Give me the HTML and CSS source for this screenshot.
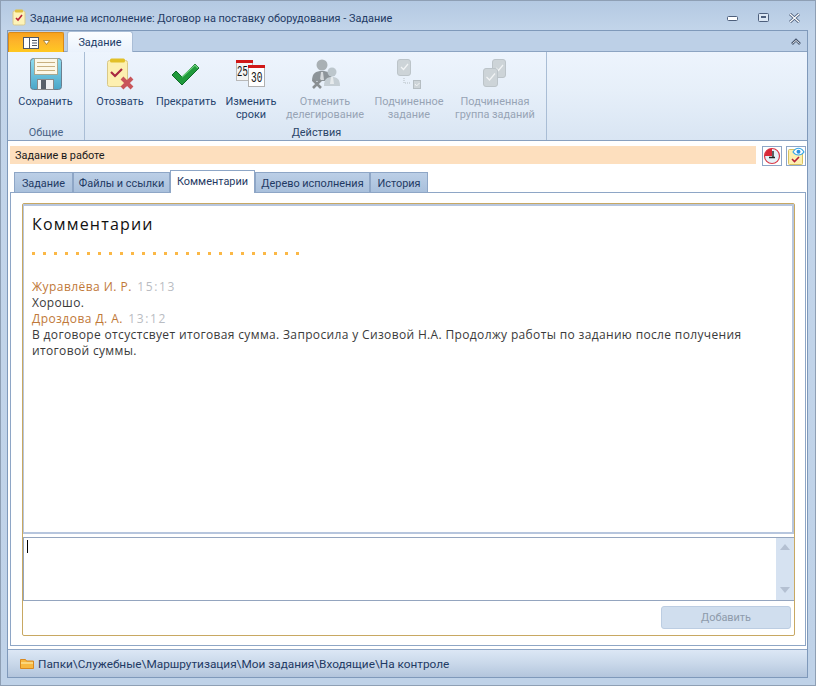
FILE: index.html
```html
<!DOCTYPE html>
<html lang="ru">
<head>
<meta charset="utf-8">
<title>Задание на исполнение</title>
<link rel="stylesheet" href="styles.css">
</head>
<body>
<div class="window">
  <div class="titlebar">
    <svg class="title-icon" width="14" height="17" viewBox="0 0 14 17">
      <rect x="1" y="2" width="12" height="14" rx="1.5" fill="#fdf3b8" stroke="#d9c98e"/>
      <rect x="3" y="0.5" width="8" height="3" rx="1" fill="#e0c040"/>
      <path d="M4 9l2 2 4-5" fill="none" stroke="#b8203a" stroke-width="1.6"/>
    </svg>
    <span class="title-text">Задание на исполнение: Договор на поставку оборудования - Задание</span>
    <div class="winbtns">
      <svg width="13" height="8" viewBox="0 0 13 8"><rect x="1.5" y="2.5" width="10" height="4" rx="1" fill="#fff" stroke="#4d5f7c"/></svg>
      <svg width="13" height="10" viewBox="0 0 13 10"><rect x="1.5" y="0.5" width="10" height="8" rx="1" fill="#dce7f4" stroke="#4d5f7c"/><rect x="4" y="3" width="5" height="2" fill="#4d5f7c"/></svg>
      <svg width="13" height="10" viewBox="0 0 13 10"><path d="M2 1l9 8M11 1l-9 8" stroke="#4d5f7c" stroke-width="3"/><path d="M2 1l9 8M11 1l-9 8" stroke="#fff" stroke-width="1.2"/></svg>
    </div>
  </div>

  <div class="frame">
    <div class="ribbon-tabs">
      <div class="appmenu">
        <svg width="17" height="12" viewBox="0 0 17 12"><rect x="0.5" y="0.5" width="15" height="11" fill="#fff" stroke="#4d5668"/><path d="M6.5 1v10M9 3.500h5M9 6h5M9 8.500h5" stroke="#4d5668"/></svg>
        <svg width="7" height="5" viewBox="0 0 7 5"><path d="M0.500 0.500h6l-3 4z" fill="#fff" stroke="#8a6a20" stroke-width="0.700"/></svg>
      </div>
      <div class="ribbon-tab">Задание</div>
      <svg class="collapse" width="10" height="8" viewBox="0 0 10 8"><path d="M1 6l4-4 4 4" fill="none" stroke="#46556e" stroke-width="2.600"/><path d="M1.500 5.500l3.500-3 3.500 3" fill="none" stroke="#fff" stroke-width="0.900"/></svg>
    </div>

    <div class="ribbon">
      <div class="group group-common">
        <div class="group-btns">
          <div class="rbtn w-save">
            <svg class="ricon" width="32" height="32" viewBox="0 0 32 32">
              <defs><linearGradient id="disk" x1="0" y1="0" x2="0" y2="1"><stop offset="0" stop-color="#8fdcf0"/><stop offset="1" stop-color="#4aa6c8"/></linearGradient></defs>
              <rect x="0.500" y="0.500" width="31" height="31" rx="3" fill="url(#disk)" stroke="#6a7f8f"/>
              <rect x="4.500" y="0.500" width="23" height="16" fill="#fdf8e8" stroke="#a8a890"/>
              <path d="M7 4.500h18M7 8.500h18M7 12.500h18" stroke="#c8b080"/>
              <rect x="7.500" y="21.500" width="16" height="10" fill="#f2f2f2" stroke="#8a8a8a"/>
              <rect x="11" y="22" width="5" height="9" fill="#5a6068"/>
            </svg>
            <span class="rlabel">Сохранить</span>
          </div>
        </div>
        <div class="group-name">Общие</div>
      </div>

      <div class="group group-actions">
        <div class="group-btns">
          <div class="rbtn w-recall">
            <svg class="ricon" width="32" height="32" viewBox="0 0 32 32">
              <rect x="3.500" y="2.500" width="20" height="26" rx="2" fill="#fdf0b0" stroke="#d8c888"/>
              <rect x="6" y="0.500" width="15" height="4" rx="1.500" fill="#e2c028"/>
              <path d="M7 14l4 4 7-7" fill="none" stroke="#a82840" stroke-width="2.200"/>
              <path d="M18 20l10 10M28 20l-10 10" stroke="#c8555a" stroke-width="4"/>
            </svg>
            <span class="rlabel">Отозвать</span>
          </div>
          <div class="rbtn w-stop">
            <svg class="ricon" width="32" height="32" viewBox="0 0 32 32">
              <path d="M2 17l4-4 6 6L25 6l4 4-17 17z" fill="#1f9a3c" stroke="#0f6a28"/>
              <path d="M12 19L25 7l3 3" fill="none" stroke="#6fd080" stroke-width="1.200"/>
            </svg>
            <span class="rlabel">Прекратить</span>
          </div>
          <div class="rbtn w-dates">
            <svg class="ricon" width="32" height="32" viewBox="0 0 32 32">
              <rect x="1.500" y="2.500" width="16" height="20" fill="#f4f4f4" stroke="#b8b8b8"/>
              <rect x="1" y="2" width="17" height="3" fill="#d01818"/>
              <text class="cal-num" transform="translate(2 18) scale(0.900 1.500)">25</text>
              <rect x="13.500" y="7.500" width="16" height="21" fill="#fff" stroke="#b0b0b0"/>
              <rect x="13" y="7" width="17" height="3" fill="#d01818"/>
              <text class="cal-num" transform="translate(16 24) scale(0.950 1.500)">30</text>
            </svg>
            <span class="rlabel">Изменить<br>сроки</span>
          </div>
          <div class="rbtn w-deleg off">
            <svg class="ricon" width="32" height="32" viewBox="0 0 32 32">
              <circle cx="13" cy="7" r="5.500" fill="#a9b0b4"/>
              <path d="M3 23c0-8 4-10 10-10s10 2 10 10z" fill="#8d9499"/>
              <path d="M12 14h2l1 8h-4z" fill="#d5d9dc"/>
              <circle cx="23" cy="14" r="4.500" fill="#bcc6cc"/>
              <path d="M15 28c0-7 3-9 8-9s8 2 8 9z" fill="#c5ced4"/>
              <path d="M22 19h2l1 7h-4z" fill="#e6eaec"/>
              <path d="M4 22l8 8M12 22l-8 8" stroke="#8a8f92" stroke-width="2.600"/>
            </svg>
            <span class="rlabel">Отменить<br>делегирование</span>
          </div>
          <div class="rbtn w-sub off">
            <svg class="ricon" width="32" height="32" viewBox="0 0 32 32">
              <rect x="4.500" y="1.500" width="13" height="16" rx="2.500" fill="#cdd4d8" stroke="#bcc4c9"/>
              <path d="M8 9l2.500 2.500L15 6" fill="none" stroke="#f2f4f5" stroke-width="1.200"/>
              <path d="M11 20v5h7" fill="none" stroke="#b5bdc2" stroke-dasharray="1 1"/>
              <rect x="20.500" y="22.500" width="7" height="8" fill="#cdd4d8" stroke="#b5bdc2"/>
              <path d="M22 26l1.500 2 3-3" fill="none" stroke="#f2f4f5"/>
            </svg>
            <span class="rlabel">Подчиненное<br>задание</span>
          </div>
          <div class="rbtn w-subgroup off">
            <svg class="ricon" width="32" height="32" viewBox="0 0 32 32">
              <rect x="13.500" y="1.500" width="13" height="18" rx="2.500" fill="#cdd4d8" stroke="#bcc4c9"/>
              <path d="M17 10l2.500 2.500L24 7" fill="none" stroke="#f2f4f5" stroke-width="1.200"/>
              <rect x="4.500" y="10.500" width="14" height="18" rx="2.500" fill="#cdd4d8" stroke="#bcc4c9"/>
              <path d="M7.500 19l3 3L16 15.500" fill="none" stroke="#f2f4f5" stroke-width="1.200"/>
            </svg>
            <span class="rlabel">Подчиненная<br>группа заданий</span>
          </div>
        </div>
        <div class="group-name name-actions">Действия</div>
      </div>
    </div>

    <div class="state-row">
      <div class="state-text">Задание в работе</div>
      <div class="state-icon state-clock">
        <svg width="18" height="18" viewBox="0 0 18 18">
          <circle cx="9" cy="9" r="7.500" fill="#e4f2f8" stroke="#d83848" stroke-width="1.200"/>
          <path d="M9 9V1.500A7.500 7.500 0 0 0 2 7v2z" fill="#d82838"/>
          <path d="M10 4v6M6 10.500h6" stroke="#222" stroke-width="1.400"/>
        </svg>
      </div>
      <div class="state-icon">
        <svg width="18" height="18" viewBox="0 0 18 18">
          <rect x="1.500" y="2.500" width="14" height="15" rx="1" fill="#fdf0b0" stroke="#d8c060"/>
          <path d="M5 12l2.500 2.500L12 10" fill="none" stroke="#b82038" stroke-width="1.600"/>
          <path d="M6 5c3-5 8-5 11 0-3 4-8 4-11 0z" fill="#fff" stroke="#38a8e8" stroke-width="1.200"/>
          <circle cx="11.500" cy="4.800" r="2" fill="#2890e0"/>
        </svg>
      </div>
    </div>

    <div class="tabs">
      <div class="tab t1">Задание</div>
      <div class="tab t2">Файлы и ссылки</div>
      <div class="tab t3 active">Комментарии</div>
      <div class="tab t4">Дерево исполнения</div>
      <div class="tab t5">История</div>
    </div>

    <div class="panel">
      <div class="comments-box">
        <div class="comments-view">
          <h1 class="comments-title">Комментарии</h1>
          <div class="dots"></div>
          <div class="comment-list">
            <div><span class="author">Журавлёва И. Р.</span> <span class="time">15:13</span></div>
            <div class="comment-text">Хорошо.</div>
            <div><span class="author">Дроздова Д. А.</span> <span class="time">13:12</span></div>
            <div class="comment-text">В договоре отсустсвует итоговая сумма. Запросила у Сизовой Н.А. Продолжу работы по заданию после получения итоговой суммы.</div>
          </div>
        </div>
        <div class="input-box">
          <div class="input-area"><span class="caret"></span></div>
          <div class="scroll">
            <svg width="12" height="6" viewBox="0 0 12 6"><path d="M1 6l5-6 5 6z" fill="#b4c0d2"/></svg>
            <svg width="12" height="6" viewBox="0 0 12 6"><path d="M1 0l5 6 5-6z" fill="#b4c0d2"/></svg>
          </div>
        </div>
        <div class="add-row"><div class="add-btn">Добавить</div></div>
      </div>
    </div>

    <div class="statusbar">
      <svg width="14" height="11" viewBox="0 0 14 11"><path d="M0.500 10.500V1.500h5l1 1.500h7v7.500z" fill="#f8b840" stroke="#d88820"/><path d="M1 5h12" stroke="#fde090" stroke-width="1.500"/></svg>
      <span class="path">Папки\Служебные\Маршрутизация\Мои задания\Входящие\На контроле</span>
    </div>
  </div>
</div>
</body>
</html>
```

FILE: styles.css
```css
html, body {
  margin: 0;
  padding: 0;
}

body {
  width: 816px;
  height: 686px;
  overflow: hidden;
  font-family: "Roboto", sans-serif;
  font-size: 10.900px;
  color: #1e3a5f;
}

.window {
  box-sizing: border-box;
  width: 816px;
  height: 686px;
  display: flex;
  flex-direction: column;
  border: 1px solid #8e9fb4;
  background: linear-gradient(180deg, #b4c9e2 0, #c3d5ea 30px, #bfd2e8 100%);
}

/* title */
.titlebar {
  height: 29px;
  flex: none;
  display: flex;
  align-items: center;
  padding: 6px 0 0 11px;
  box-sizing: border-box;
}

.title-icon {
  margin: -2px 4px 0 0;
}

.title-text {
  color: #1f3a64;
}

.winbtns {
  margin: -2px 0 0 auto;
  display: flex;
  align-items: center;
  gap: 18px;
  padding-right: 14px;
}

/* main frame */
.frame {
  flex: 1;
  margin: 0 7px 7px 6px;
  border: 1px solid #7f99ba;
  display: flex;
  flex-direction: column;
  background: #fff;
  min-height: 0;
}

.ribbon-tabs {
  height: 20px;
  flex: none;
  display: flex;
  align-items: flex-end;
  background: #bdd0e7;
  border-bottom: 1px solid #8ca4c2;
}

.appmenu {
  box-sizing: border-box;
  width: 56px;
  height: 20px;
  margin-bottom: -1px;
  display: flex;
  align-items: center;
  justify-content: center;
  gap: 3px;
  background: linear-gradient(180deg, #f7a21c 0, #fdb42a 45%, #ffc822 100%);
  border: 1px solid #d8891a;
  border-bottom: 0;
  border-radius: 2px 2px 0 0;
}

.ribbon-tab {
  box-sizing: border-box;
  width: 66px;
  height: 21px;
  margin: 0 0 -1px 3px;
  text-align: center;
  line-height: 22px;
  background: linear-gradient(180deg, #fbfdff, #eaf2fc);
  border: 1px solid #a9bdd6;
  border-bottom: 0;
  border-radius: 3px 3px 0 0;
  color: #1c3c68;
}

.collapse {
  margin: 0 6px 5px auto;
}

.ribbon {
  height: 89px;
  flex: none;
  box-sizing: border-box;
  display: flex;
  background: linear-gradient(180deg, #edf4fd 0, #e6eff9 45%, #d9e5f3 100%);
  border-bottom: 1px solid #88a0bf;
}

.group {
  box-sizing: border-box;
  display: flex;
  flex-direction: column;
  border-right: 1px solid #a9bdd5;
}

.group-common {
  width: 77px;
}

.group-actions {
  width: 462px;
  padding-left: 2px;
}

.group-btns {
  flex: 1;
  display: flex;
}

.group-name {
  height: 16px;
  padding-top: 2px;
  box-sizing: border-box;
  text-align: center;
  line-height: 13px;
  color: #4a6488;
}

.name-actions {
  color: #2a4468;
}

.rbtn {
  display: flex;
  flex-direction: column;
  align-items: center;
  padding-top: 6px;
  line-height: 13px;
  text-align: center;
  color: #26446e;
}

.ricon {
  margin-bottom: 5px;
}

.rlabel {
  white-space: nowrap;
}

.off .rlabel {
  color: #97a4b5;
}

.w-save { width: 75px; }
.w-recall { width: 66px; }
.w-stop { width: 66px; }
.w-dates { width: 64px; }
.w-deleg { width: 84px; }
.w-sub { width: 84px; }
.w-subgroup { width: 88px; }

.cal-num {
  font-family: "Liberation Mono", monospace;
  font-size: 10px;
  fill: #111;
}

/* state line */
.state-row {
  flex: none;
  display: flex;
  align-items: flex-start;
  padding: 5px 1px 0 2px;
  height: 30px;
  box-sizing: border-box;
  background: #fff;
}

.state-text {
  width: 746px;
  height: 18px;
  line-height: 19px;
  padding-left: 5px;
  box-sizing: border-box;
  background: #fddfbe;
  color: #1a1a1a;
}

.state-icon {
  box-sizing: border-box;
  width: 20px;
  height: 20px;
  margin-left: 4px;
  border: 1px solid #8ea6c6;
  display: flex;
  align-items: center;
  justify-content: center;
}

.state-clock {
  margin-left: 6px;
}

.tabs {
  flex: none;
  margin-top: -1px;
  height: 22px;
  display: flex;
  align-items: flex-end;
  padding-left: 6px;
}

.tab {
  box-sizing: border-box;
  height: 20px;
  line-height: 21px;
  text-align: center;
  background: linear-gradient(180deg, #bccfe6, #a9c0dc);
  border: 1px solid #8ea6c6;
  border-bottom: 0;
  color: #1f3a64;
}

.t1 { width: 59px; }
.t2 { width: 97px; }
.t3 { width: 85px; }
.t4 { width: 115px; }
.t5 { width: 58px; }

.tab.active {
  height: 23px;
  margin-bottom: -1px;
  background: #fff;
  position: relative;
  line-height: 21px;
}

.panel {
  flex: 1;
  min-height: 0;
  margin: 0 1px 3px 2px;
  box-sizing: border-box;
  border: 1px solid #8ea6c6;
  padding: 10px 10px 9px 11px;
  background: #fff;
}

.comments-box {
  box-sizing: border-box;
  height: 100%;
  display: flex;
  flex-direction: column;
  border: 1px solid #c8a862;
  border-radius: 2px;
}

.comments-view {
  flex: 1;
  min-height: 0;
  border: 2px solid #b7c6de;
  border-width: 2px 2px 2px 1px;
  padding: 7px 8px 0 8px;
  color: #333;
  font-family: "Open Sans", sans-serif;
}

.comments-title {
  margin: 0;
  font-size: 16px;
  font-weight: 400;
  line-height: 22px;
  letter-spacing: 1.200px;
  color: #111;
}

.dots {
  width: 268px;
  height: 3px;
  margin: 17px 0 24px;
  background: repeating-linear-gradient(90deg, #fbb846 0, #fbb846 3px, transparent 3px, transparent 11px);
}

.comment-list {
  font-size: 12px;
  line-height: 16px;
  letter-spacing: 0.350px;
}

.author {
  color: #c07838;
  letter-spacing: 0.450px;
}

.time {
  color: #b9bcc2;
  letter-spacing: 1.600px;
  margin-left: 2px;
}

.comment-text {
  color: #3a3a3a;
}

.input-box {
  flex: none;
  height: 64px;
  margin-top: 3px;
  box-sizing: border-box;
  display: flex;
  border: 1px solid #94a5bf;
  border-right: 0;
}

.input-area {
  flex: 1;
  padding: 2px 0 0 3px;
}

.caret {
  display: block;
  width: 1px;
  height: 13px;
  background: #000;
}

.scroll {
  width: 18px;
  display: flex;
  flex-direction: column;
  align-items: center;
  justify-content: space-between;
  box-sizing: border-box;
  padding: 6px 0 7px;
  background: #d6e2f1;
}

.add-row {
  flex: none;
  height: 34px;
  display: flex;
  justify-content: flex-end;
  padding: 5px 3px 0 0;
  box-sizing: border-box;
}

.add-btn {
  box-sizing: border-box;
  width: 130px;
  height: 23px;
  line-height: 21px;
  text-align: center;
  background: #d0deee;
  border: 1px solid #bccde2;
  border-radius: 3px;
  color: #8e9bab;
}

.statusbar {
  flex: none;
  height: 28px;
  box-sizing: border-box;
  display: flex;
  align-items: center;
  gap: 4px;
  padding-left: 12px;
  background: linear-gradient(180deg, #dce7f5 0, #c9d8ea 50%, #b3c5dc 100%);
  border-top: 1px solid #8ea6c6;
}

.path {
  font-size: 11.800px;
  color: #1f3a64;
}
```
